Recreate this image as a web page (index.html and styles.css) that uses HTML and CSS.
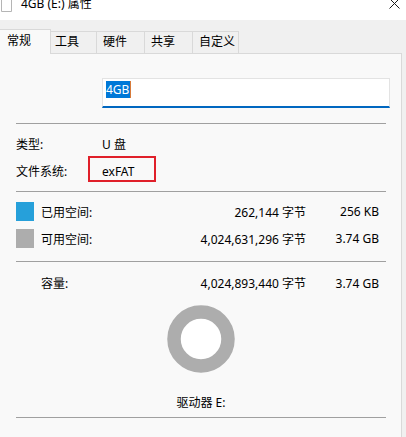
FILE: index.html
```html
<!DOCTYPE html>
<html lang="zh-CN">
<head>
<meta charset="utf-8">
<title>4GB (E:) 属性</title>
<link rel="stylesheet" href="styles.css">
</head>
<body>
<div class="window">
  <div class="titlebar">
    <svg class="file-icon" width="14" height="20" viewBox="0 0 14 20">
      <path d="M1.5 -4 V11.5 H11.5 V-4" fill="#fff" stroke="#b5b5b5" stroke-width="1"/>
    </svg>
    <span class="title">4GB (E:) 属性</span>
    <svg class="close" width="12" height="20" viewBox="0 0 12 20">
      <path d="M0.5 -1.5 L10.5 8.5 M10.5 -1.5 L0.5 8.5" stroke="#1a1a1a" stroke-width="1"/>
    </svg>
  </div>
  <div class="tabs">
    <div class="tab active">常规</div>
    <div class="tab">工具</div>
    <div class="tab">硬件</div>
    <div class="tab">共享</div>
    <div class="tab">自定义</div>
  </div>
  <div class="panel">
    <div class="name-field"><span class="sel">4GB</span><span class="caret"></span></div>
    <div class="sep sep1"></div>
    <div class="info">
      <div class="info-row"><span class="label">类型:</span><span class="value">U 盘</span></div>
      <div class="info-row"><span class="label">文件系统:</span><span class="value fs">exFAT<span class="mark"></span></span></div>
    </div>
    <div class="sep sep2"></div>
    <div class="space">
      <div class="space-row"><span class="swatch used"></span><span class="slabel">已用空间:</span><span class="bytes">262,144 字节</span><span class="size">256 KB</span></div>
      <div class="space-row"><span class="swatch free"></span><span class="slabel">可用空间:</span><span class="bytes">4,024,631,296 字节</span><span class="size">3.74 GB</span></div>
    </div>
    <div class="sep sep3"></div>
    <div class="space-row capacity"><span class="swatch none"></span><span class="slabel">容量:</span><span class="bytes">4,024,893,440 字节</span><span class="size">3.74 GB</span></div>
    <div class="donut">
      <svg width="68" height="68" viewBox="0 0 68 68">
        <circle cx="34" cy="34" r="27" fill="#fff" stroke="#adadad" stroke-width="13.5"/>
      </svg>
    </div>
    <div class="drive">驱动器 E:</div>
    <div class="sep sep4"></div>
  </div>
</div>
</body>
</html>
```
FILE: styles.css
```css
html, body {
  margin: 0;
  padding: 0;
}
body {
  width: 406px;
  height: 437px;
  overflow: hidden;
  background: #f0f0f0;
  font-family: "Noto Sans", "Noto Sans CJK SC", sans-serif;
  font-size: 12px;
  color: #000;
}
.window {
  width: 406px;
  height: 437px;
  overflow: hidden;
}
.titlebar {
  height: 20px;
  background: #fff;
  display: flex;
  align-items: flex-start;
}
.file-icon {
  flex: none;
}
.title {
  margin-left: 7px;
  margin-top: -4px;
  line-height: 16px;
  font-size: 12px;
}
.close {
  margin-left: auto;
  margin-right: 5px;
}
.tabs {
  height: 33px;
  display: flex;
  align-items: flex-end;
  margin-left: -2px;
  position: relative;
  z-index: 1;
}
.tab {
  box-sizing: border-box;
  height: 22px;
  border-top: 1px solid #d9d9d9;
  border-right: 1px solid #d9d9d9;
  background: #f0f0f0;
  line-height: 20px;
  padding-left: 6px;
}
.tab.active {
  height: 25px;
  margin-bottom: -1px;
  border-left: 1px solid #d9d9d9;
  background: #f9f9f9;
  width: 53px;
  padding-left: 8px;
  line-height: 21px;
}
.tab:nth-child(2) { width: 46px; padding-left: 4px; }
.tab:nth-child(3) { width: 48px; }
.tab:nth-child(4) { width: 48px; }
.tab:nth-child(5) { width: 46px; }
.panel {
  box-sizing: border-box;
  margin-left: -1px;
  width: 403px;
  height: 420px;
  border: 1px solid #d9d9d9;
  background: #f9f9f9;
  padding-left: 16px;
  padding-top: 24px;
}
.name-field {
  box-sizing: border-box;
  margin-left: 86px;
  width: 288px;
  height: 30px;
  background: #fff;
  border: 1px solid #e3e3e3;
  border-bottom: 2px solid #0067c0;
  padding: 2px 0 0 3px;
  display: flex;
  align-items: flex-start;
}
.sel {
  background: #0078d7;
  color: #fff;
  line-height: 17px;
  padding: 0 1px 0 0;
}
.caret {
  width: 1px;
  height: 17px;
  background: #d77a3a;
}
.sep {
  width: 370px;
  height: 1px;
  background: #a0a0a0;
}
.sep1 { margin-top: 15px; }
.info {
  margin-top: 8px;
  display: flex;
  flex-direction: column;
  gap: 1px;
}
.info-row {
  display: grid;
  grid-template-columns: 86px auto;
  height: 26px;
  line-height: 26px;
}
.value.fs {
  position: relative;
}
.mark {
  position: absolute;
  left: -14px;
  top: -3px;
  width: 64px;
  height: 22px;
  border: 2px solid #e0202a;
}
.sep2 { margin-top: 6px; }
.space {
  margin-top: 6px;
}
.space-row {
  display: grid;
  grid-template-columns: 25px 100px 165px 73px;
  align-items: center;
  height: 27px;
}
.swatch {
  width: 18px;
  height: 19px;
}
.swatch.used { background: #26a0da; }
.swatch.free { background: #adadad; }
.bytes, .size {
  text-align: right;
  white-space: nowrap;
}
.sep3 { margin-top: 9px; }
.capacity {
  margin-top: 8px;
  height: 26px;
}
.donut {
  width: 370px;
  margin-top: 9px;
  display: flex;
  justify-content: center;
}
.donut svg {
  display: block;
}
.drive {
  width: 370px;
  text-align: center;
  margin-top: 21px;
  height: 18px;
  line-height: 18px;
}
.sep4 { margin-top: 5px; }
```
